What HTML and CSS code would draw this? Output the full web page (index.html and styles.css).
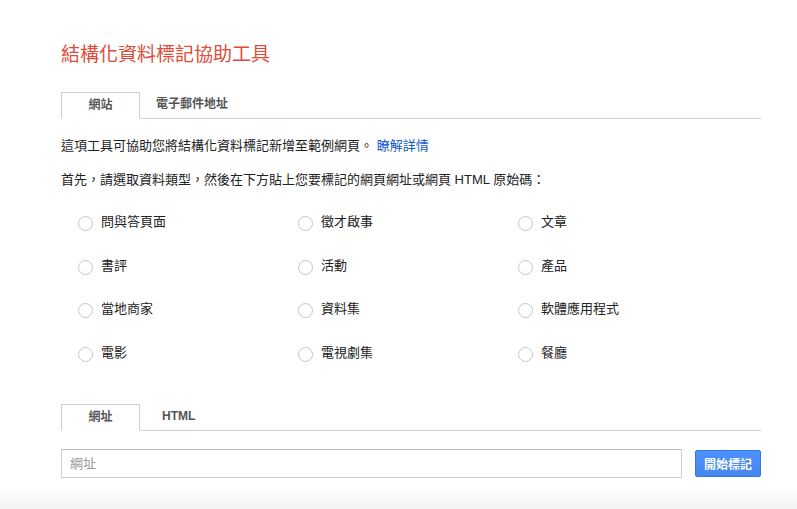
FILE: index.html
```html
<!DOCTYPE html>
<html lang="zh-Hant">
<head>
<meta charset="utf-8">
<title>結構化資料標記協助工具</title>
<link rel="stylesheet" href="styles.css">
</head>
<body>
<div class="page">
  <h1 class="title">結構化資料標記協助工具</h1>
  <div class="tabs">
    <div class="tab active">網站</div>
    <div class="tab">電子郵件地址</div>
  </div>
  <p class="intro">這項工具可協助您將結構化資料標記新增至範例網頁。 <a class="link" href="#">瞭解詳情</a></p>
  <p class="intro second">首先，請選取資料類型，然後在下方貼上您要標記的網頁網址或網頁 HTML 原始碼：</p>
  <div class="types">
    <label class="type"><span class="radio"></span>問與答頁面</label>
    <label class="type"><span class="radio"></span>徵才啟事</label>
    <label class="type"><span class="radio"></span>文章</label>
    <label class="type"><span class="radio"></span>書評</label>
    <label class="type"><span class="radio"></span>活動</label>
    <label class="type"><span class="radio"></span>產品</label>
    <label class="type"><span class="radio"></span>當地商家</label>
    <label class="type"><span class="radio"></span>資料集</label>
    <label class="type"><span class="radio"></span>軟體應用程式</label>
    <label class="type"><span class="radio"></span>電影</label>
    <label class="type"><span class="radio"></span>電視劇集</label>
    <label class="type"><span class="radio"></span>餐廳</label>
  </div>
  <div class="tabs lower">
    <div class="tab active">網址</div>
    <div class="tab latin">HTML</div>
  </div>
  <div class="url-row">
    <div class="url-input">網址</div>
    <button class="start">開始標記</button>
  </div>
</div>
<div class="footer-fade"></div>
</body>
</html>
```
FILE: styles.css
```css
html, body {
  margin: 0;
  padding: 0;
  background: #fff;
  height: 100%;
  overflow: hidden;
}
body {
  font-family: "Liberation Sans", "Noto Sans CJK TC", sans-serif;
  color: #222;
  font-size: 13px;
  position: relative;
}
.page {
  width: 700px;
  padding: 41px 0 0 61px;
}
.title {
  margin: 0;
  font-weight: normal;
  font-size: 19px;
  line-height: 28px;
  color: #dd4b39;
}
.tabs {
  display: flex;
  margin-top: 23px;
  border-bottom: 1px solid #cfcfcf;
  height: 26px;
}
.tab {
  box-sizing: border-box;
  height: 26px;
  line-height: 25px;
  font-size: 12px;
  font-weight: bold;
  color: #555;
  padding: 0 16px;
}
.tab.active {
  width: 79px;
  text-align: center;
  border: 1px solid #cfcfcf;
  border-bottom: 1px solid #fff;
  height: 27px;
  background: #fff;
}
.tab.latin {
  padding-left: 22px;
}
.intro {
  margin: 17px 0 0;
  font-size: 13px;
  line-height: 20px;
  color: #222;
}
.intro.second {
  margin-top: 14px;
}
.link {
  color: #15c;
  text-decoration: none;
}
.types {
  display: grid;
  grid-template-columns: 220px 220px 220px;
  grid-auto-rows: 43.5px;
  margin-top: 23px;
  padding-left: 17px;
}
.type {
  display: flex;
  align-items: flex-start;
  font-size: 13px;
  line-height: 18px;
  color: #222;
}
.radio {
  box-sizing: border-box;
  width: 15px;
  height: 15px;
  border: 1px solid #c6c6c6;
  border-radius: 50%;
  margin: 3px 8px 0 0;
  flex: none;
}
.tabs.lower {
  margin-top: 17px;
}
.url-row {
  display: flex;
  align-items: center;
  margin-top: 18px;
  gap: 13px;
}
.url-input {
  box-sizing: border-box;
  width: 621px;
  height: 29px;
  border: 1px solid #d0d0d0;
  border-top-color: #c0c0c0;
  padding: 0 8px;
  line-height: 27px;
  font-size: 13px;
  color: #999;
}
.start {
  box-sizing: border-box;
  width: 66px;
  height: 27px;
  border: 1px solid #3079ed;
  border-radius: 2px;
  background: linear-gradient(#4d90fe, #4787ed);
  color: #fff;
  font-family: inherit;
  font-size: 12px;
  font-weight: bold;
  padding: 0;
}
.footer-fade {
  position: absolute;
  left: 0;
  right: 0;
  bottom: 0;
  height: 22px;
  background: linear-gradient(#fff, #f3f3f3);
}
```
